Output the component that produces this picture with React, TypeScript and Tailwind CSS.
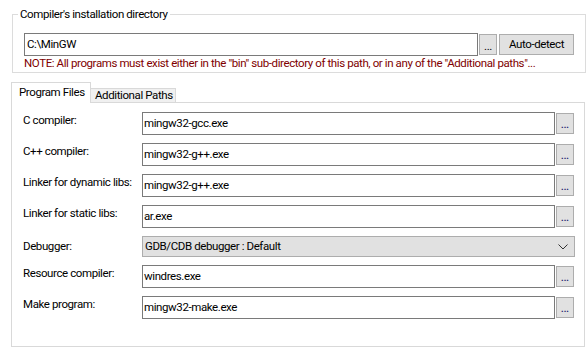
import React from "react";

type rowType = {
  label: string;
  value: string;
  select?: boolean;
};

const rows: rowType[] = [
  { label: "C compiler:", value: "mingw32-gcc.exe" },
  { label: "C++ compiler:", value: "mingw32-g++.exe" },
  { label: "Linker for dynamic libs:", value: "mingw32-g++.exe" },
  { label: "Linker for static libs:", value: "ar.exe" },
  { label: "Debugger:", value: "GDB/CDB debugger : Default", select: true },
  { label: "Resource compiler:", value: "windres.exe" },
  { label: "Make program:", value: "mingw32-make.exe" },
];

function DotsButton() {
  return (
    <button className="ml-[1px] mt-[1px] flex h-[21px] w-[18px] items-end justify-center border border-[#adadad] bg-[#e1e1e1] pb-[3px] text-[9px] leading-[9px] font-bold tracking-normal text-[#1a1a6e]">
      ...
    </button>
  );
}

function Row(props: rowType) {
  return (
    <div className="flex">
      <div
        className={
          props.select
            ? "w-[119px] pt-[3px] leading-[15px]"
            : "w-[119px] pt-[1px] leading-[15px]"
        }
      >
        {props.label}
      </div>
      {props.select ? (
        <div className="flex h-[21px] w-[433px] items-center justify-between border border-[#adadad] bg-[#e1e1e1] pl-[2px] pr-[6px]">
          <span>{props.value}</span>
          <svg width="10" height="6" viewBox="0 0 10 6" fill="none">
            <path d="M0.5 0.5 L5 5 L9.5 0.5" stroke="#333" strokeWidth="1" />
          </svg>
        </div>
      ) : (
        <>
          <div className="flex h-[23px] w-[413px] items-center border border-[#7a7a7a] bg-white pl-[1px]">
            {props.value}
          </div>
          <DotsButton />
        </>
      )}
    </div>
  );
}

export default function App() {
  return (
    <div className="h-[347px] w-[587px] overflow-hidden whitespace-nowrap bg-white pt-[7px] font-['Roboto',sans-serif] text-[11.5px] tracking-[-0.4px] text-black">
      <fieldset className="ml-[12px] h-[66px] w-[574px] border border-[#dcdcdc] px-[11px]">
        <legend className="-ml-[6px] px-[2px] leading-[15px]">
          Compiler's installation directory
        </legend>
        <div className="mt-[11px] flex items-center">
          <div className="flex h-[23px] w-[454px] items-center border border-[#7a7a7a] pl-[2px]">
            C:\MinGW
          </div>
          <button className="ml-[1px] flex h-[21px] w-[18px] items-end justify-center border border-[#adadad] bg-[#e1e1e1] pb-[2px] leading-[12px]">
            ...
          </button>
          <button className="ml-[2px] h-[21px] w-[75px] border border-[#adadad] bg-[#e1e1e1] leading-[15px]">
            Auto-detect
          </button>
        </div>
        <div className="leading-[14px] text-[#800000]">
          NOTE: All programs must exist either in the "bin" sub-directory of this path, or in any of the "Additional paths"...
        </div>
      </fieldset>

      <div className="relative z-10 -mb-[1px] ml-[11px] mt-[9px] flex h-[21px] items-end">
        <div className="h-[21px] w-[80px] border-l border-r border-t border-[#d9d9d9] bg-white pl-[7px] pt-[2px] leading-[15px]">
          Program Files
        </div>
        <div className="h-[15px] w-[85px] border-b border-r border-t border-[#d9d9d9] bg-[#f0f0f0] pl-[4px] leading-[13px]">
          Additional Paths
        </div>
      </div>
      <div className="ml-[11px] flex h-[245px] w-[574px] flex-col gap-[8px] border border-[#d9d9d9] pl-[11px] pt-[9px]">
        {rows.map((row) => (
          <Row key={row.label} {...row} />
        ))}
      </div>
    </div>
  );
}
